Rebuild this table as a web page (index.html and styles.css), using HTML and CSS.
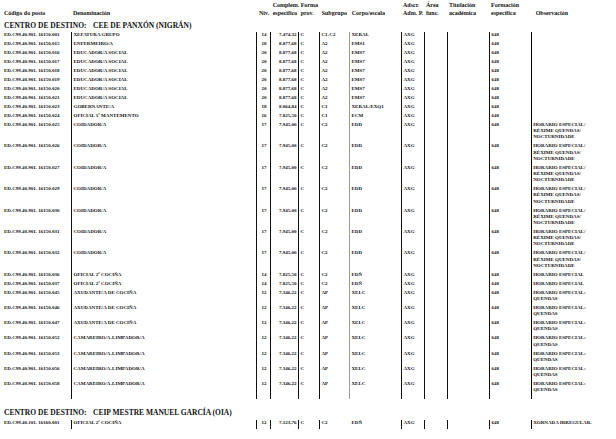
FILE: index.html
```html
<!DOCTYPE html>
<html lang="gl">
<head>
<meta charset="utf-8">
<link rel="stylesheet" href="styles.css">
</head>
<body>
<div class="page">
  <div class="head">
    <div>Código do posto</div>
    <div>Denominación</div>
    <div>Niv.</div>
    <div>Complem.<br>específico</div>
    <div>Forma<br>prov.</div>
    <div>Subgrupo</div>
    <div>Corpo/escala</div>
    <div>Adscr.<br>Adm. P.</div>
    <div>Área<br>func.</div>
    <div>Titulación<br>académica</div>
    <div>Formación<br>específica</div>
    <div>Observación</div>
  </div>

  <div class="title">CENTRO DE DESTINO:<span class="tname">CEE DE PANXÓN (NIGRÁN)</span></div>

  <div class="tbl">
    <div class="r"><div>ED.C99.40.901. 16150.001</div><div>XEFATURA GRUPO</div><div>14</div><div>7.474,32</div><div>C</div><div>C1-C2</div><div>XERAL</div><div>AXG</div><div></div><div></div><div>648</div><div></div></div>
    <div class="r"><div>ED.C99.40.901. 16150.015</div><div>ENFERMEIRO/A</div><div>18</div><div>8.877,68</div><div>C</div><div>A2</div><div>EMS1</div><div>AXG</div><div></div><div></div><div>648</div><div></div></div>
    <div class="r"><div>ED.C99.40.901. 16150.016</div><div>EDUCADOR/A SOCIAL</div><div>20</div><div>8.877,68</div><div>C</div><div>A2</div><div>EMS7</div><div>AXG</div><div></div><div></div><div>648</div><div></div></div>
    <div class="r"><div>ED.C99.40.901. 16150.017</div><div>EDUCADOR/A SOCIAL</div><div>20</div><div>8.877,68</div><div>C</div><div>A2</div><div>EMS7</div><div>AXG</div><div></div><div></div><div>648</div><div></div></div>
    <div class="r"><div>ED.C99.40.901. 16150.018</div><div>EDUCADOR/A SOCIAL</div><div>20</div><div>8.877,68</div><div>C</div><div>A2</div><div>EMS7</div><div>AXG</div><div></div><div></div><div>648</div><div></div></div>
    <div class="r"><div>ED.C99.40.901. 16150.019</div><div>EDUCADOR/A SOCIAL</div><div>20</div><div>8.877,68</div><div>C</div><div>A2</div><div>EMS7</div><div>AXG</div><div></div><div></div><div>648</div><div></div></div>
    <div class="r"><div>ED.C99.40.901. 16150.020</div><div>EDUCADOR/A SOCIAL</div><div>20</div><div>8.877,68</div><div>C</div><div>A2</div><div>EMS7</div><div>AXG</div><div></div><div></div><div>648</div><div></div></div>
    <div class="r"><div>ED.C99.40.901. 16150.021</div><div>EDUCADOR/A SOCIAL</div><div>20</div><div>8.877,68</div><div>C</div><div>A2</div><div>EMS7</div><div>AXG</div><div></div><div></div><div>648</div><div></div></div>
    <div class="r"><div>ED.C99.40.901. 16150.023</div><div>GOBERNANTE/A</div><div>18</div><div>8.064,84</div><div>C</div><div>C1</div><div>XERAL/EXQ1</div><div>AXG</div><div></div><div></div><div>648</div><div></div></div>
    <div class="r"><div>ED.C99.40.901. 16150.024</div><div>OFICIAL 1ª MANTEMENTO</div><div>16</div><div>7.825,50</div><div>C</div><div>C1</div><div>ECM</div><div>AXG</div><div></div><div></div><div>648</div><div></div></div>
    <div class="r"><div>ED.C99.40.901. 16150.025</div><div>COIDADOR/A</div><div>17</div><div>7.945,00</div><div>C</div><div>C2</div><div>EDD</div><div>AXG</div><div></div><div></div><div>648</div><div>HORARIO ESPECIAL/<br>RÉXIME QUENDAS/<br>NOCTURNIDADE</div></div>
    <div class="r"><div>ED.C99.40.901. 16150.026</div><div>COIDADOR/A</div><div>17</div><div>7.945,00</div><div>C</div><div>C2</div><div>EDD</div><div>AXG</div><div></div><div></div><div>648</div><div>HORARIO ESPECIAL/<br>RÉXIME QUENDAS/<br>NOCTURNIDADE</div></div>
    <div class="r"><div>ED.C99.40.901. 16150.027</div><div>COIDADOR/A</div><div>17</div><div>7.945,00</div><div>C</div><div>C2</div><div>EDD</div><div>AXG</div><div></div><div></div><div>648</div><div>HORARIO ESPECIAL/<br>RÉXIME QUENDAS/<br>NOCTURNIDADE</div></div>
    <div class="r"><div>ED.C99.40.901. 16150.029</div><div>COIDADOR/A</div><div>17</div><div>7.945,00</div><div>C</div><div>C2</div><div>EDD</div><div>AXG</div><div></div><div></div><div>648</div><div>HORARIO ESPECIAL/<br>RÉXIME QUENDAS/<br>NOCTURNIDADE</div></div>
    <div class="r"><div>ED.C99.40.901. 16150.030</div><div>COIDADOR/A</div><div>17</div><div>7.945,00</div><div>C</div><div>C2</div><div>EDD</div><div>AXG</div><div></div><div></div><div>648</div><div>HORARIO ESPECIAL/<br>RÉXIME QUENDAS/<br>NOCTURNIDADE</div></div>
    <div class="r"><div>ED.C99.40.901. 16150.031</div><div>COIDADOR/A</div><div>17</div><div>7.945,00</div><div>C</div><div>C2</div><div>EDD</div><div>AXG</div><div></div><div></div><div>648</div><div>HORARIO ESPECIAL/<br>RÉXIME QUENDAS/<br>NOCTURNIDADE</div></div>
    <div class="r"><div>ED.C99.40.901. 16150.032</div><div>COIDADOR/A</div><div>17</div><div>7.945,00</div><div>C</div><div>C2</div><div>EDD</div><div>AXG</div><div></div><div></div><div>648</div><div>HORARIO ESPECIAL/<br>RÉXIME QUENDAS/<br>NOCTURNIDADE</div></div>
    <div class="r"><div>ED.C99.40.901. 16150.036</div><div>OFICIAL 2ª COCIÑA</div><div>14</div><div>7.825,50</div><div>C</div><div>C2</div><div>EDÑ</div><div>AXG</div><div></div><div></div><div>648</div><div>HORARIO ESPECIAL</div></div>
    <div class="r"><div>ED.C99.40.901. 16150.037</div><div>OFICIAL 2ª COCIÑA</div><div>14</div><div>7.825,50</div><div>C</div><div>C2</div><div>EDÑ</div><div>AXG</div><div></div><div></div><div>648</div><div>HORARIO ESPECIAL</div></div>
    <div class="r"><div>ED.C99.40.901. 16150.045</div><div>AXUDANTE/A DE COCIÑA</div><div>12</div><div>7.346,22</div><div>C</div><div>AP</div><div>XELC</div><div>AXG</div><div></div><div></div><div>648</div><div>HORARIO ESPECIAL:<br>QUENDAS</div></div>
    <div class="r"><div>ED.C99.40.901. 16150.046</div><div>AXUDANTE/A DE COCIÑA</div><div>12</div><div>7.346,22</div><div>C</div><div>AP</div><div>XELC</div><div>AXG</div><div></div><div></div><div>648</div><div>HORARIO ESPECIAL:<br>QUENDAS</div></div>
    <div class="r"><div>ED.C99.40.901. 16150.047</div><div>AXUDANTE/A DE COCIÑA</div><div>12</div><div>7.346,22</div><div>C</div><div>AP</div><div>XELC</div><div>AXG</div><div></div><div></div><div>648</div><div>HORARIO ESPECIAL:<br>QUENDAS</div></div>
    <div class="r"><div>ED.C99.40.901. 16150.052</div><div>CAMAREIRO/A-LIMPADOR/A</div><div>12</div><div>7.346,22</div><div>C</div><div>AP</div><div>XELC</div><div>AXG</div><div></div><div></div><div>648</div><div>HORARIO ESPECIAL:<br>QUENDAS</div></div>
    <div class="r"><div>ED.C99.40.901. 16150.053</div><div>CAMAREIRO/A-LIMPADOR/A</div><div>12</div><div>7.346,22</div><div>C</div><div>AP</div><div>XELC</div><div>AXG</div><div></div><div></div><div>648</div><div>HORARIO ESPECIAL:<br>QUENDAS</div></div>
    <div class="r"><div>ED.C99.40.901. 16150.056</div><div>CAMAREIRO/A-LIMPADOR/A</div><div>12</div><div>7.346,22</div><div>C</div><div>AP</div><div>XELC</div><div>AXG</div><div></div><div></div><div>648</div><div>HORARIO ESPECIAL:<br>QUENDAS</div></div>
    <div class="r"><div>ED.C99.40.901. 16150.058</div><div>CAMAREIRO/A-LIMPADOR/A</div><div>12</div><div>7.346,22</div><div>C</div><div>AP</div><div>XELC</div><div>AXG</div><div></div><div></div><div>648</div><div>HORARIO ESPECIAL:<br>QUENDAS</div></div>
    <div class="r tail"><div></div><div></div><div></div><div></div><div></div><div></div><div></div><div></div><div></div><div></div><div></div><div></div></div>
  </div>

  <div class="title t2">CENTRO DE DESTINO:<span class="tname">CEIP MESTRE MANUEL GARCÍA (OIA)</span></div>

  <div class="tbl tbl2">
    <div class="r"><div>ED.C99.40.101. 16160.001</div><div>OFICIAL 2ª COCIÑA</div><div>12</div><div>7.123,76</div><div>C</div><div>C2</div><div>EDÑ</div><div>AXG</div><div></div><div></div><div>648</div><div>XORNADA IRREGULAR.</div></div>
  </div>
</div>
</body>
</html>
```

FILE: styles.css
```css
* { box-sizing: border-box; }

html, body {
  margin: 0;
  padding: 0;
  background: #fff;
}

body {
  color: #111;
  font-family: "Liberation Serif", "Times New Roman", serif;
  font-weight: bold;
}

.page {
  --cols: 71px 185px 14px 28px 21px 30px 52px 23px 23px 42px 42px 85px;
  width: 616px;
}

/* column header */
.head {
  display: grid;
  grid-template-columns: var(--cols);
  align-items: end;
  font-size: 6px;
  line-height: 8px;
  padding-top: 0.5px;
  height: 16.5px;
  white-space: nowrap;
}
.head > div { padding-left: 2px; }
.head > div:nth-child(1) { padding-left: 4px; }
.head > div:nth-child(2) { padding-left: 2px; }
.head > div:nth-child(3) { padding-left: 3px; }
.head > div:nth-child(4) { padding-left: 2.7px; }
.head > div:nth-child(5) { padding-left: 2.7px; }
.head > div:nth-child(6) { padding-left: 2.7px; }
.head > div:nth-child(7) { padding-left: 2.7px; }
.head > div:nth-child(12) { padding-left: 4.7px; }

/* section title */
.title {
  margin-top: 4px;
  padding-left: 4px;
  font-size: 7.5px;
  line-height: 9px;
  white-space: nowrap;
}
.tname { margin-left: 6.5px; }
.t2 { margin-top: 9.5px; }

/* table body */
.tbl { margin-top: 2.5px; }
.tbl2 { margin-top: 3px; }

.r {
  display: grid;
  grid-template-columns: var(--cols);
  font-size: 5px;
  line-height: 6.2px;
  white-space: nowrap;
}
.r > div {
  padding: 0 0 2.8px 1.5px;
  border-left: 1px solid #111;
}
.r > div:nth-child(1) { border-left: none; padding-left: 4px; }
.r > div:nth-child(3) { text-align: center; padding-left: 1px; }
.r > div:nth-child(4) { text-align: right; padding-right: 1.5px; }
.r > div:nth-child(7) { border-left-color: #9a9a9a; }
.r > div:nth-child(12) { border-left: 1.6px solid #000; padding-left: 1.2px; }

.tail { height: 2px; }
.tbl2 .r > div:nth-child(7) { border-left-color: transparent; }
```
